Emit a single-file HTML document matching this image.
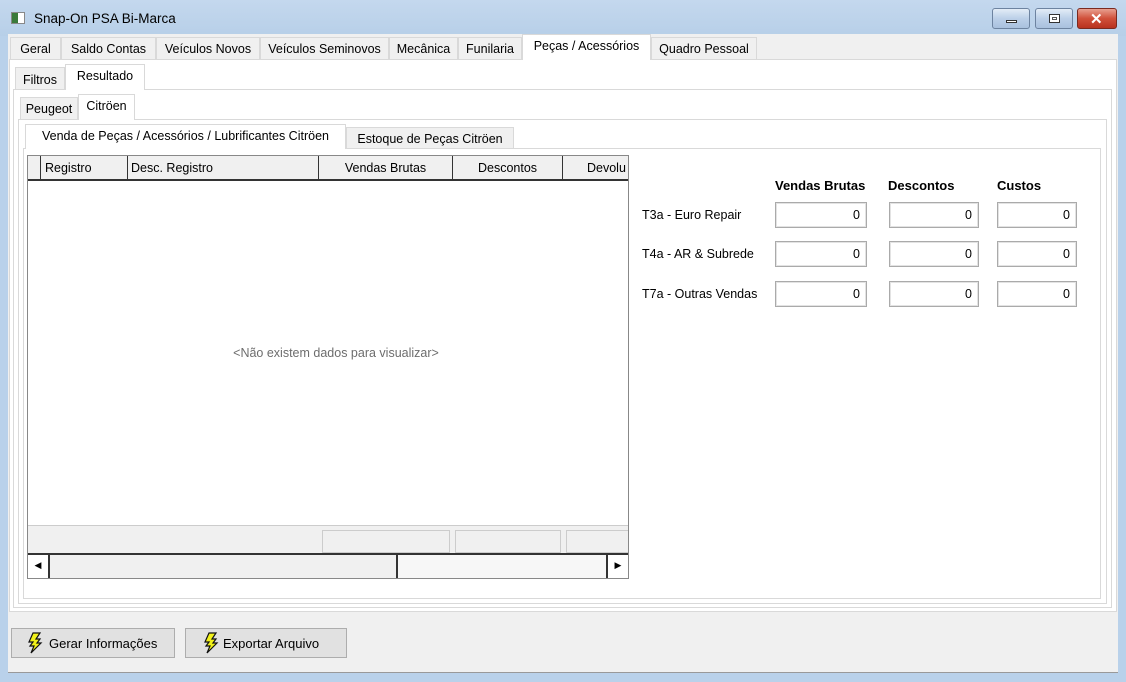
<!DOCTYPE html>
<html><head><meta charset="utf-8"><style>
*{box-sizing:border-box;margin:0;padding:0}
body{width:1126px;height:682px;overflow:hidden;background:#b9d1ea;font-family:"Liberation Sans",sans-serif;font-size:12.5px;color:#000;position:relative}
.a{position:absolute}
.title{left:0;top:0;width:1126px;height:36px;background:linear-gradient(#c4d8ee,#b7cfe8)}
.tab{position:absolute;height:22px;background:#f0f0f0;border:1px solid #d9d9d9;border-bottom:none;padding:4px 0 0 0;text-align:center;white-space:nowrap;letter-spacing:0}
.sel{background:#fff;border-color:#d9d9d9}
.pan{position:absolute;background:#fff;border:1px solid #d9d9d9}
.hd{position:absolute;top:0;height:25px;border-right:1px solid #333;padding-top:5px;white-space:nowrap;overflow:hidden}
.in{position:absolute;height:26px;border:1px solid #aaa;background:#fff;text-align:right;padding:5px 6px 0 0;box-shadow:inset 0 0 0 1px #e3e3e3}
.lb{position:absolute;left:642px}
.bh{position:absolute;top:178px;font-weight:bold;font-size:13px}
.btn{position:absolute;top:628px;height:30px;background:#e1e1e1;border:1px solid #adadad;padding:7px 0 0 37px;font-size:13px}
.wb{position:absolute;top:8px;height:21px;border:1px solid #6d83a0;border-radius:3px;background:linear-gradient(#e3ecf7,#bcd0e8 50%,#a9c1de)}
</style></head><body>
<div class="a title"></div>
<div class="a" style="left:11px;top:12px;width:14px;height:12px;background:#fff;border:1px solid #888"><div style="width:6px;height:10px;background:#3a7a3a"></div></div>
<div class="a" style="left:34px;top:11px;font-size:13.5px">Snap-On PSA Bi-Marca</div>
<div class="wb" style="left:992px;width:38px"><div class="a" style="left:13px;top:11px;width:11px;height:3px;background:#fff;border:1px solid #333"></div></div>
<div class="wb" style="left:1035px;width:38px"><div class="a" style="left:13px;top:5px;width:11px;height:9px;border:1px solid #333;background:#fff"><div style="margin:2px;height:3px;border:1px solid #555"></div></div></div>
<div class="wb" style="left:1077px;width:40px;border-color:#7a2a20;background:linear-gradient(#e8a090,#d0503a 50%,#b8321f)"><div class="a" style="left:12px;top:1px;color:#fff;font-weight:bold;font-size:15px">✕</div></div>

<div class="a" style="left:8px;top:34px;width:1110px;height:639px;background:#f0f0f0;border-bottom:1px solid #999"></div>
<div class="tab" style="left:10px;top:37px;width:51px">Geral</div>
<div class="tab" style="left:61px;top:37px;width:95px">Saldo Contas</div>
<div class="tab" style="left:156px;top:37px;width:104px">Veículos Novos</div>
<div class="tab" style="left:260px;top:37px;width:129px">Veículos Seminovos</div>
<div class="tab" style="left:389px;top:37px;width:69px">Mecânica</div>
<div class="tab" style="left:458px;top:37px;width:64px">Funilaria</div>
<div class="tab" style="left:651px;top:37px;width:106px">Quadro Pessoal</div>
<div class="pan" style="left:9px;top:59px;width:1108px;height:553px"></div>
<div class="tab sel" style="left:522px;top:34px;width:129px;height:26px;border-bottom:none">Peças / Acessórios</div>

<div class="tab" style="left:15px;top:67px;width:50px;padding-top:5px">Filtros</div>
<div class="pan" style="left:13px;top:89px;width:1099px;height:519px"></div>
<div class="tab sel" style="left:65px;top:64px;width:80px;height:26px">Resultado</div>

<div class="tab" style="left:20px;top:97px;width:58px;padding-top:4px">Peugeot</div>
<div class="pan" style="left:18px;top:119px;width:1089px;height:485px"></div>
<div class="tab sel" style="left:78px;top:94px;width:57px;height:26px">Citröen</div>

<div class="tab" style="left:346px;top:127px;width:168px;padding-top:4px">Estoque de Peças Citröen</div>
<div class="pan" style="left:23px;top:148px;width:1078px;height:451px"></div>
<div class="tab sel" style="left:25px;top:124px;width:321px;height:25px">Venda de Peças / Acessórios / Lubrificantes Citröen</div>

<div class="a" style="left:27px;top:155px;width:602px;height:424px;border:1px solid #888;background:#fff;overflow:hidden">
 <div class="a" style="left:0;top:0;width:600px;height:25px;background:#f0f0f0;border-bottom:2px solid #333;overflow:hidden">
  <div class="hd" style="left:0;width:13px"></div>
  <div class="hd" style="left:13px;width:87px;padding-left:4px">Registro</div>
  <div class="hd" style="left:100px;width:191px;padding-left:3px">Desc. Registro</div>
  <div class="hd" style="left:291px;width:134px;text-align:center">Vendas Brutas</div>
  <div class="hd" style="left:425px;width:110px;text-align:center">Descontos</div>
  <div class="hd" style="left:535px;width:80px;padding-left:24px;border:none">Devolu</div>
 </div>
 <div class="a" style="left:0;top:190px;width:616px;text-align:center;color:#6d6d6d">&lt;Não existem dados para visualizar&gt;</div>
 <div class="a" style="left:0;top:369px;width:600px;height:28px;background:#f0f0f0;border-top:1px solid #ccc">
  <div class="a" style="left:294px;top:4px;width:128px;height:23px;border:1px solid #ccc"></div>
  <div class="a" style="left:427px;top:4px;width:106px;height:23px;border:1px solid #ccc"></div>
  <div class="a" style="left:538px;top:4px;width:70px;height:23px;border:1px solid #ccc"></div>
 </div>
 <div class="a" style="left:0;top:397px;width:600px;height:25px;background:#f7f7f7;border-top:2px solid #333">
  <div class="a" style="left:0;top:0;width:22px;height:23px;background:#fff;border-right:2px solid #333;text-align:center;font-size:9px;padding-top:5px">◀</div>
  <div class="a" style="left:22px;top:0;width:348px;height:23px;background:#f0f0f0;border-right:2px solid #333"></div>
  <div class="a" style="left:578px;top:0;width:22px;height:23px;background:#fff;border-left:2px solid #333;text-align:center;font-size:9px;padding-top:5px">▶</div>
 </div>
</div>

<div class="bh" style="left:775px">Vendas Brutas</div>
<div class="bh" style="left:888px">Descontos</div>
<div class="bh" style="left:997px">Custos</div>
<div class="lb" style="top:208px">T3a - Euro Repair</div>
<div class="lb" style="top:247px">T4a - AR &amp; Subrede</div>
<div class="lb" style="top:287px">T7a - Outras Vendas</div>
<div class="in" style="left:775px;top:202px;width:92px">0</div>
<div class="in" style="left:889px;top:202px;width:90px">0</div>
<div class="in" style="left:997px;top:202px;width:80px">0</div>
<div class="in" style="left:775px;top:241px;width:92px">0</div>
<div class="in" style="left:889px;top:241px;width:90px">0</div>
<div class="in" style="left:997px;top:241px;width:80px">0</div>
<div class="in" style="left:775px;top:281px;width:92px">0</div>
<div class="in" style="left:889px;top:281px;width:90px">0</div>
<div class="in" style="left:997px;top:281px;width:80px">0</div>

<div class="btn" style="left:11px;width:164px">Gerar Informações</div>
<div class="btn" style="left:185px;width:162px">Exportar Arquivo</div>
<svg class="a" style="left:27px;top:632px" width="16" height="22" viewBox="0 0 16 22"><path d="M6 1L2 10H6L3 14H7L4 21L14 11H10L13 7H9L13 1Z" fill="#f2f21a" stroke="#111" stroke-width="1.2"/></svg>
<svg class="a" style="left:203px;top:632px" width="16" height="22" viewBox="0 0 16 22"><path d="M6 1L2 10H6L3 14H7L4 21L14 11H10L13 7H9L13 1Z" fill="#f2f21a" stroke="#111" stroke-width="1.2"/></svg>
</body></html>
